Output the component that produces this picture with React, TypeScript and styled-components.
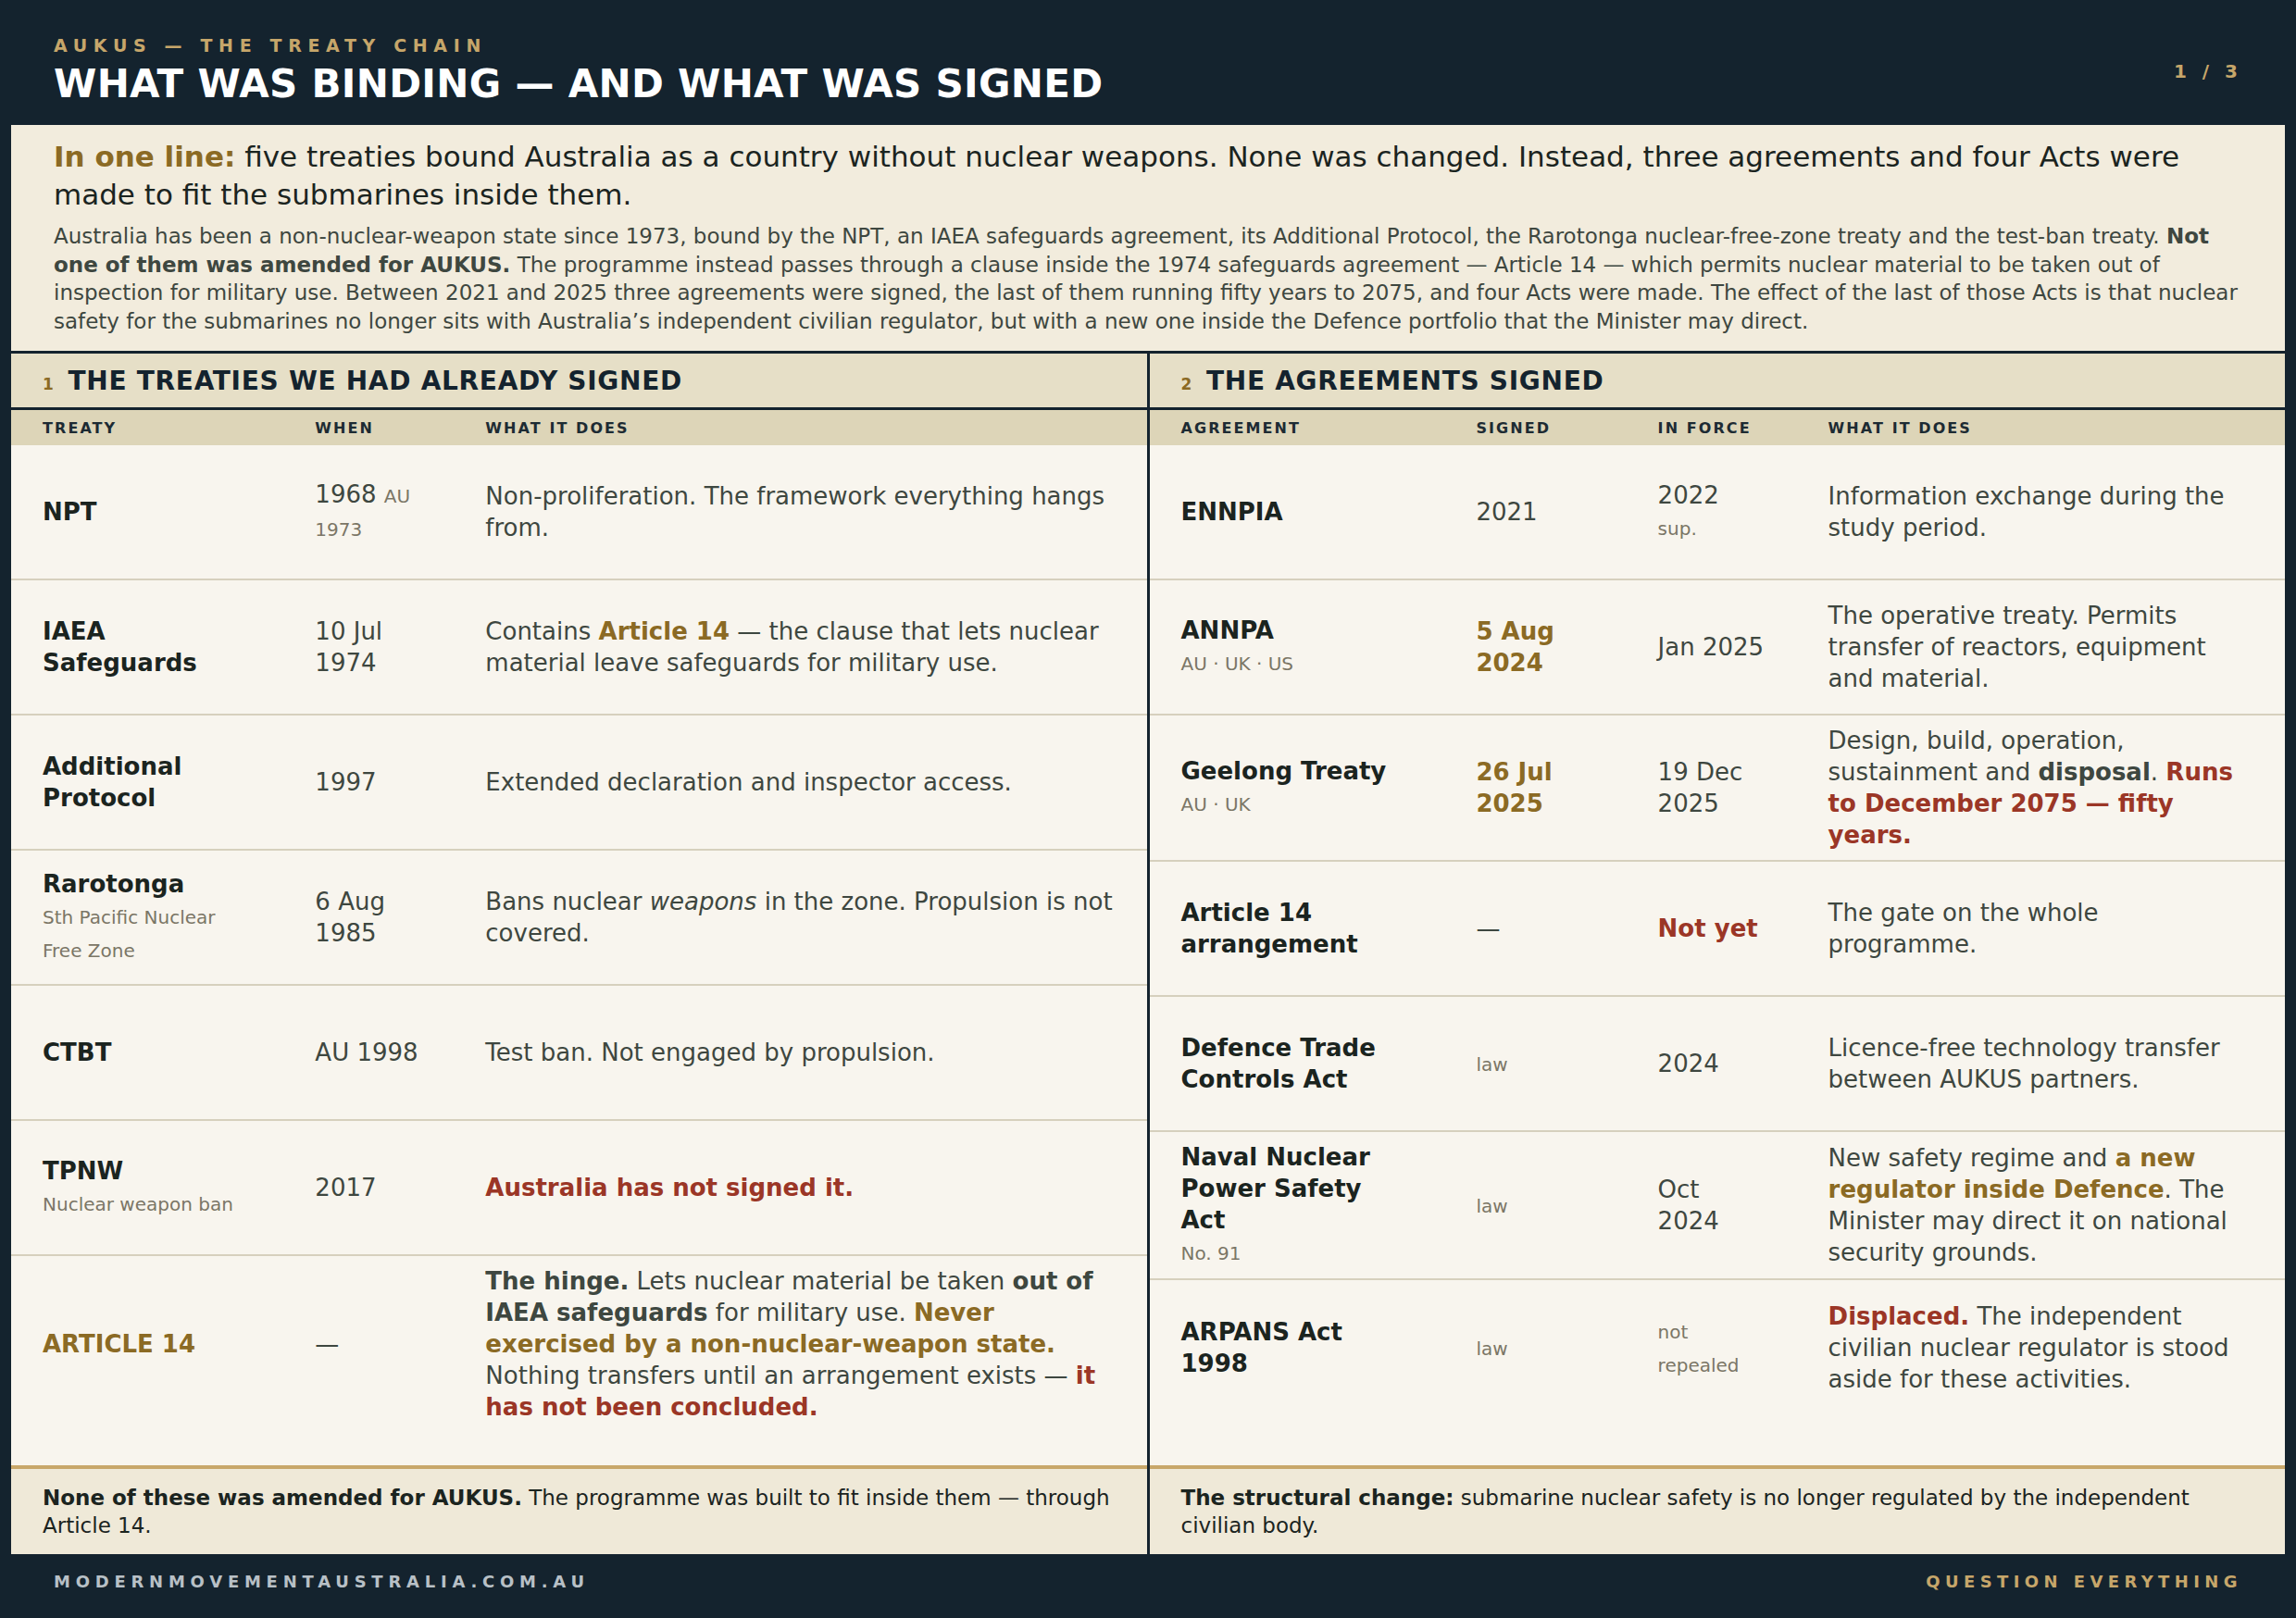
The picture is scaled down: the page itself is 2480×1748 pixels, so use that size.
import React from "react";
import styled, { createGlobalStyle } from "styled-components";

const C = {
  navy: "#14232e",
  gold: "#c6a66a",
  goldText: "#8b6a24",
  red: "#9b3626",
  ink: "#1b241f",
  body: "#3e4740",
  sub: "#7b7666",
  cream: "#f2ecdd",
  sectionBg: "#e6dfc7",
  colHeadBg: "#ddd5b8",
  tableBg: "#f8f5ee",
  divider: "#d6d0bd",
  noteBg: "#efe9d8",
  noteLine: "#c8a76a",
  footText: "#b8c0c6",
};

const GlobalStyle = createGlobalStyle`
  html, body { margin: 0; padding: 0; background: ${C.navy}; }
  body { font-family: "DejaVu Sans", Verdana, sans-serif; }
  *, *::before, *::after { box-sizing: border-box; }
`;

const Page = styled.div`
  height: 100vh;
  display: flex;
  flex-direction: column;
  overflow: hidden;
  background: ${C.navy};
`;

/* ---------- header ---------- */
const Header = styled.header`
  flex-shrink: 0;
  display: flex;
  align-items: center;
  justify-content: space-between;
  padding: 37px 58px 19px;
`;

const Eyebrow = styled.div`
  font-size: 19px;
  line-height: 24px;
  font-weight: 700;
  letter-spacing: 0.35em;
  color: ${C.gold};
`;

const Title = styled.h1`
  margin: 4px 0 0;
  font-size: 42px;
  line-height: 51px;
  font-weight: 700;
  letter-spacing: 0.3px;
  color: #ffffff;
`;

const PageNum = styled.div`
  font-size: 20px;
  font-weight: 700;
  letter-spacing: 0.25em;
  color: ${C.gold};
`;

/* ---------- intro ---------- */
const Intro = styled.section`
  flex-shrink: 0;
  margin: 0 12px;
  background: ${C.cream};
  padding: 14px 46px 17px;
`;

const Lead = styled.p`
  margin: 0;
  font-size: 31px;
  line-height: 41px;
  color: ${C.ink};
`;

const LeadTag = styled.strong`
  font-weight: 700;
  color: ${C.goldText};
`;

const IntroBody = styled.p`
  margin: 9px 0 0;
  font-size: 23px;
  line-height: 30.5px;
  color: ${C.body};
  strong { font-weight: 700; }
`;

/* ---------- tables ---------- */
const Tables = styled.div`
  flex: 1;
  min-height: 0;
  margin: 3px 12px 0;
  display: grid;
  grid-template-columns: 1fr 1fr;
  gap: 3px;
`;

const Panel = styled.section`
  display: flex;
  flex-direction: column;
  min-height: 0;
  background: ${C.tableBg};
`;

const SectionHead = styled.div`
  flex-shrink: 0;
  height: 61px;
  display: flex;
  align-items: center;
  padding: 5px 34px 0;
  background: ${C.sectionBg};
  border-bottom: 3px solid ${C.navy};
`;

const SectionTitle = styled.h2`
  margin: 0;
  font-size: 28px;
  line-height: 34px;
  font-weight: 700;
  letter-spacing: 0.7px;
  color: ${C.navy};
`;

const SectionNum = styled.span`
  font-size: 17px;
  font-weight: 700;
  color: ${C.goldText};
  margin-right: 15px;
`;

const ColHead = styled.div<{ $cols: string }>`
  flex-shrink: 0;
  height: 38px;
  display: grid;
  grid-template-columns: ${(p) => p.$cols};
  align-items: center;
  background: ${C.colHeadBg};
`;

const ColLabel = styled.div`
  padding: 0 34px;
  font-size: 16px;
  font-weight: 700;
  letter-spacing: 0.13em;
  color: #1d2b33;
`;

const Rows = styled.div`
  flex: 1;
  display: flex;
  flex-direction: column;
  min-height: 0;
`;

const Row = styled.div<{ $cols: string; $last?: boolean }>`
  display: grid;
  grid-template-columns: ${(p) => p.$cols};
  align-items: center;
  min-height: 146px;
  padding: 10px 0;
  flex: 0 0 auto;
  border-bottom: ${(p) => (p.$last ? "none" : `2px solid ${C.divider}`)};
`;

const Cell = styled.div<{ $name?: boolean; $gold?: boolean }>`
  padding: 0 34px;
  font-size: 26px;
  line-height: 34px;
  font-weight: ${(p) => (p.$name ? 700 : 400)};
  color: ${(p) => (p.$gold ? C.goldText : p.$name ? C.ink : C.body)};
  em { font-style: italic; }
`;

const Sub = styled.span`
  font-size: 20px;
  font-weight: 400;
  color: ${C.sub};
`;

const B = styled.strong`
  font-weight: 700;
`;

const GoldB = styled.strong`
  font-weight: 700;
  color: ${C.goldText};
`;

const RedB = styled.strong`
  font-weight: 700;
  color: ${C.red};
`;

const Note = styled.div`
  flex-shrink: 0;
  border-top: 4px solid ${C.noteLine};
  background: ${C.noteBg};
  padding: 16px 34px;
  font-size: 23px;
  line-height: 30px;
  color: ${C.ink};
`;

/* ---------- footer ---------- */
const Footer = styled.footer`
  flex-shrink: 0;
  height: 69px;
  display: flex;
  align-items: center;
  justify-content: space-between;
  padding: 0 58px 11px;
`;

const Site = styled.div`
  font-size: 18px;
  font-weight: 700;
  letter-spacing: 0.32em;
  color: ${C.footText};
`;

const Motto = styled(Site)`
  letter-spacing: 0.3em;
  color: ${C.gold};
`;

const LEFT_COLS = "24% 15% 1fr";
const RIGHT_COLS = "26% 16% 15% 1fr";

export default function App() {
  return (
    <>
      <GlobalStyle />
      <Page>
        <Header>
          <div>
            <Eyebrow>AUKUS — THE TREATY CHAIN</Eyebrow>
            <Title>WHAT WAS BINDING — AND WHAT WAS SIGNED</Title>
          </div>
          <PageNum>1 / 3</PageNum>
        </Header>

        <Intro>
          <Lead>
            <LeadTag>In one line:</LeadTag> five treaties bound Australia as a country without nuclear
            weapons. None was changed. Instead, three agreements and four Acts were made to fit the
            submarines inside them.
          </Lead>
          <IntroBody>
            Australia has been a non-nuclear-weapon state since 1973, bound by the NPT, an IAEA
            safeguards agreement, its Additional Protocol, the Rarotonga nuclear-free-zone treaty and
            the test-ban treaty. <strong>Not one of them was amended for AUKUS.</strong> The programme
            instead passes through a clause inside the 1974 safeguards agreement — Article 14 — which
            permits nuclear material to be taken out of inspection for military use. Between 2021 and
            2025 three agreements were signed, the last of them running fifty years to 2075, and four
            Acts were made. The effect of the last of those Acts is that nuclear safety for the
            submarines no longer sits with Australia’s independent civilian regulator, but with a new
            one inside the Defence portfolio that the Minister may direct.
          </IntroBody>
        </Intro>

        <Tables>
          <Panel>
            <SectionHead>
              <SectionTitle>
                <SectionNum>1</SectionNum>THE TREATIES WE HAD ALREADY SIGNED
              </SectionTitle>
            </SectionHead>
            <ColHead $cols={LEFT_COLS}>
              <ColLabel>TREATY</ColLabel>
              <ColLabel>WHEN</ColLabel>
              <ColLabel>WHAT IT DOES</ColLabel>
            </ColHead>
            <Rows>
              <Row $cols={LEFT_COLS}>
                <Cell $name>NPT</Cell>
                <Cell>
                  1968 <Sub>AU 1973</Sub>
                </Cell>
                <Cell>Non-proliferation. The framework everything hangs from.</Cell>
              </Row>
              <Row $cols={LEFT_COLS}>
                <Cell $name>IAEA Safeguards</Cell>
                <Cell>10 Jul 1974</Cell>
                <Cell>
                  Contains <GoldB>Article 14</GoldB> — the clause that lets nuclear material leave
                  safeguards for military use.
                </Cell>
              </Row>
              <Row $cols={LEFT_COLS}>
                <Cell $name>Additional Protocol</Cell>
                <Cell>1997</Cell>
                <Cell>Extended declaration and inspector access.</Cell>
              </Row>
              <Row $cols={LEFT_COLS}>
                <Cell $name>
                  Rarotonga
                  <br />
                  <Sub>Sth Pacific Nuclear Free Zone</Sub>
                </Cell>
                <Cell>6 Aug 1985</Cell>
                <Cell>
                  Bans nuclear <em>weapons</em> in the zone. Propulsion is not covered.
                </Cell>
              </Row>
              <Row $cols={LEFT_COLS}>
                <Cell $name>CTBT</Cell>
                <Cell>AU 1998</Cell>
                <Cell>Test ban. Not engaged by propulsion.</Cell>
              </Row>
              <Row $cols={LEFT_COLS}>
                <Cell $name>
                  TPNW
                  <br />
                  <Sub>Nuclear weapon ban</Sub>
                </Cell>
                <Cell>2017</Cell>
                <Cell>
                  <RedB>Australia has not signed it.</RedB>
                </Cell>
              </Row>
              <Row $cols={LEFT_COLS} $last>
                <Cell $name $gold>
                  ARTICLE 14
                </Cell>
                <Cell>—</Cell>
                <Cell>
                  <B>The hinge.</B> Lets nuclear material be taken <B>out of IAEA safeguards</B> for
                  military use. <GoldB>Never exercised by a non-nuclear-weapon state.</GoldB> Nothing
                  transfers until an arrangement exists — <RedB>it has not been concluded.</RedB>
                </Cell>
              </Row>
            </Rows>
            <Note>
              <B>None of these was amended for AUKUS.</B> The programme was built to fit inside them
              — through Article 14.
            </Note>
          </Panel>

          <Panel>
            <SectionHead>
              <SectionTitle>
                <SectionNum>2</SectionNum>THE AGREEMENTS SIGNED
              </SectionTitle>
            </SectionHead>
            <ColHead $cols={RIGHT_COLS}>
              <ColLabel>AGREEMENT</ColLabel>
              <ColLabel>SIGNED</ColLabel>
              <ColLabel>IN FORCE</ColLabel>
              <ColLabel>WHAT IT DOES</ColLabel>
            </ColHead>
            <Rows>
              <Row $cols={RIGHT_COLS}>
                <Cell $name>ENNPIA</Cell>
                <Cell>2021</Cell>
                <Cell>
                  2022
                  <br />
                  <Sub>sup.</Sub>
                </Cell>
                <Cell>Information exchange during the study period.</Cell>
              </Row>
              <Row $cols={RIGHT_COLS}>
                <Cell $name>
                  ANNPA
                  <br />
                  <Sub>AU · UK · US</Sub>
                </Cell>
                <Cell>
                  <GoldB>5 Aug 2024</GoldB>
                </Cell>
                <Cell>Jan 2025</Cell>
                <Cell>The operative treaty. Permits transfer of reactors, equipment and material.</Cell>
              </Row>
              <Row $cols={RIGHT_COLS}>
                <Cell $name>
                  Geelong Treaty
                  <br />
                  <Sub>AU · UK</Sub>
                </Cell>
                <Cell>
                  <GoldB>26 Jul 2025</GoldB>
                </Cell>
                <Cell>19 Dec 2025</Cell>
                <Cell>
                  Design, build, operation, sustainment and <B>disposal</B>.{" "}
                  <RedB>Runs to December 2075 — fifty years.</RedB>
                </Cell>
              </Row>
              <Row $cols={RIGHT_COLS}>
                <Cell $name>Article 14 arrangement</Cell>
                <Cell>—</Cell>
                <Cell>
                  <RedB>Not yet</RedB>
                </Cell>
                <Cell>The gate on the whole programme.</Cell>
              </Row>
              <Row $cols={RIGHT_COLS}>
                <Cell $name>Defence Trade Controls Act</Cell>
                <Cell>
                  <Sub>law</Sub>
                </Cell>
                <Cell>2024</Cell>
                <Cell>Licence-free technology transfer between AUKUS partners.</Cell>
              </Row>
              <Row $cols={RIGHT_COLS}>
                <Cell $name>
                  Naval Nuclear Power Safety Act
                  <br />
                  <Sub>No. 91</Sub>
                </Cell>
                <Cell>
                  <Sub>law</Sub>
                </Cell>
                <Cell>Oct 2024</Cell>
                <Cell>
                  New safety regime and <GoldB>a new regulator inside Defence</GoldB>. The Minister
                  may direct it on national security grounds.
                </Cell>
              </Row>
              <Row $cols={RIGHT_COLS} $last>
                <Cell $name>ARPANS Act 1998</Cell>
                <Cell>
                  <Sub>law</Sub>
                </Cell>
                <Cell>
                  <Sub>not repealed</Sub>
                </Cell>
                <Cell>
                  <RedB>Displaced.</RedB> The independent civilian nuclear regulator is stood aside
                  for these activities.
                </Cell>
              </Row>
            </Rows>
            <Note>
              <B>The structural change:</B> submarine nuclear safety is no longer regulated by the
              independent civilian body.
            </Note>
          </Panel>
        </Tables>

        <Footer>
          <Site>MODERNMOVEMENTAUSTRALIA.COM.AU</Site>
          <Motto>QUESTION EVERYTHING</Motto>
        </Footer>
      </Page>
    </>
  );
}
